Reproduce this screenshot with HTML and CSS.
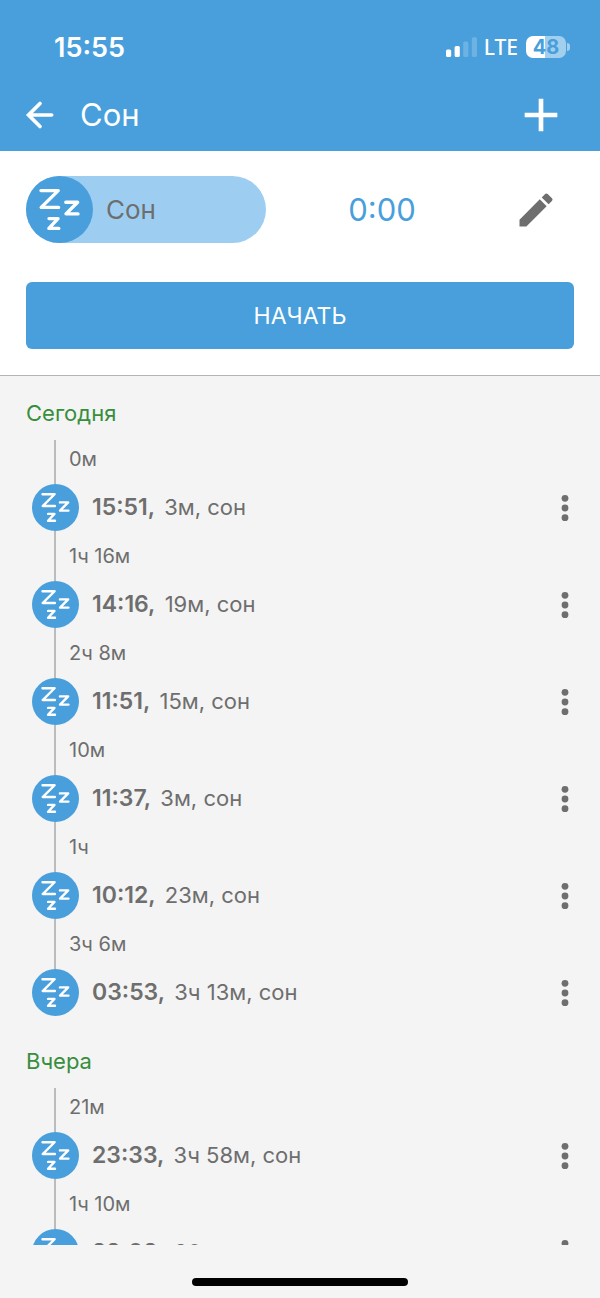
FILE: index.html
```html
<!DOCTYPE html>
<html lang="ru">
<head>
<meta charset="utf-8">
<meta name="viewport" content="width=device-width, initial-scale=1">
<title>Сон</title>
<link rel="stylesheet" href="styles.css">
</head>
<body>
<svg class="defs" aria-hidden="true">
  <symbol id="zzz" viewBox="0 0 67 67">
    <g fill="none" stroke="#fff" stroke-width="3.4" stroke-linecap="round" stroke-linejoin="round">
      <path d="M15 14.6H32.2L15.2 31.4H32.6"/>
      <path d="M39.8 26.2H51.6L40 37.9H52"/>
      <path d="M23 42.6H32L22.9 52.4H32.8"/>
    </g>
  </symbol>
  <symbol id="dots" viewBox="0 0 8 28">
    <g fill="#6e6e6e"><circle cx="4" cy="4.3" r="3.4"/><circle cx="4" cy="14" r="3.4"/><circle cx="4" cy="23.7" r="3.4"/></g>
  </symbol>
</svg>
<header class="header">
  <div class="status">
    <span class="clock">15:55</span>
    <div class="indicators">
      <svg class="signal" viewBox="0 0 32 22" fill="#fff" aria-hidden="true">
        <rect x="0" y="13.5" width="5.2" height="7.5" rx="1.5"/>
        <rect x="8.6" y="10" width="5.2" height="11" rx="1.5"/>
        <rect x="17.2" y="5.5" width="5.2" height="15.5" rx="1.5" opacity=".2"/>
        <rect x="25.8" y="1.3" width="5.2" height="19.7" rx="1.5" opacity=".2"/>
      </svg>
      <span class="network">LTE</span>
      <div class="battery">48</div>
      <span class="nub"></span>
    </div>
  </div>
  <nav class="nav">
    <button class="icon-button" aria-label="Назад">
      <svg width="40" height="40" viewBox="0 0 24 24" fill="none" stroke="#fff" stroke-width="2.2" stroke-linecap="round"><path d="M19 12H5.2M12 5.1L5.1 12l6.9 6.9"/></svg>
    </button>
    <h1 class="title">Сон</h1>
    <button class="icon-button" aria-label="Добавить">
      <svg width="56" height="56" viewBox="0 0 24 24" fill="#fff"><path d="M19 13h-6v6h-2v-6H5v-2h6V5h2v6h6z"/></svg>
    </button>
  </nav>
</header>
<section class="timer">
  <div class="timer-row">
    <button class="pill"><svg class="pill-icon" aria-hidden="true"><use href="#zzz"/></svg><span>Сон</span></button>
    <span class="elapsed">0:00</span>
    <button class="icon-button edit" aria-label="Изменить">
      <svg width="44" height="44" viewBox="0 0 24 24" fill="#6e6e6e"><path d="M3 17.25V21h3.75L17.81 9.94l-3.75-3.75L3 17.25zM20.71 7.04a1 1 0 0 0 0-1.41l-2.34-2.34a1 1 0 0 0-1.41 0l-1.83 1.83 3.75 3.75 1.83-1.83z"/></svg>
    </button>
  </div>
  <button class="start">НАЧАТЬ</button>
</section>
<main class="log">
  <section class="day">
    <h2 class="day-title">Сегодня</h2>
    <div class="gap">0м</div>
    <div class="entry"><svg class="entry-icon" aria-hidden="true"><use href="#zzz"/></svg><p class="entry-text"><b>15:51,</b> 3м, сон</p><button class="more" aria-label="Меню"><svg width="8" height="28"><use href="#dots"/></svg></button></div>
    <div class="gap">1ч 16м</div>
    <div class="entry"><svg class="entry-icon" aria-hidden="true"><use href="#zzz"/></svg><p class="entry-text"><b>14:16,</b> 19м, сон</p><button class="more" aria-label="Меню"><svg width="8" height="28"><use href="#dots"/></svg></button></div>
    <div class="gap">2ч 8м</div>
    <div class="entry"><svg class="entry-icon" aria-hidden="true"><use href="#zzz"/></svg><p class="entry-text"><b>11:51,</b> 15м, сон</p><button class="more" aria-label="Меню"><svg width="8" height="28"><use href="#dots"/></svg></button></div>
    <div class="gap">10м</div>
    <div class="entry"><svg class="entry-icon" aria-hidden="true"><use href="#zzz"/></svg><p class="entry-text"><b>11:37,</b> 3м, сон</p><button class="more" aria-label="Меню"><svg width="8" height="28"><use href="#dots"/></svg></button></div>
    <div class="gap">1ч</div>
    <div class="entry"><svg class="entry-icon" aria-hidden="true"><use href="#zzz"/></svg><p class="entry-text"><b>10:12,</b> 23м, сон</p><button class="more" aria-label="Меню"><svg width="8" height="28"><use href="#dots"/></svg></button></div>
    <div class="gap">3ч 6м</div>
    <div class="entry"><svg class="entry-icon" aria-hidden="true"><use href="#zzz"/></svg><p class="entry-text"><b>03:53,</b> 3ч 13м, сон</p><button class="more" aria-label="Меню"><svg width="8" height="28"><use href="#dots"/></svg></button></div>
  </section>
  <section class="day">
    <h2 class="day-title">Вчера</h2>
    <div class="gap">21м</div>
    <div class="entry"><svg class="entry-icon" aria-hidden="true"><use href="#zzz"/></svg><p class="entry-text"><b>23:33,</b> 3ч 58м, сон</p><button class="more" aria-label="Меню"><svg width="8" height="28"><use href="#dots"/></svg></button></div>
    <div class="gap">1ч 10м</div>
    <div class="entry"><svg class="entry-icon" aria-hidden="true"><use href="#zzz"/></svg><p class="entry-text"><b>22:02,</b> 20м, сон</p><button class="more" aria-label="Меню"><svg width="8" height="28"><use href="#dots"/></svg></button></div>
  </section>
</main>
<footer class="home"><span class="home-bar"></span></footer>
</body>
</html>
```
FILE: styles.css
```css
:root {
  --blue: #489fdc;
  --blue-light: #9dcef2;
  --ink: #6e6e6e;
  --surface: #f4f4f4;
}

* { box-sizing: border-box; }

body {
  margin: 0;
  height: 100vh;
  display: flex;
  flex-direction: column;
  background: var(--surface);
  color: var(--ink);
  font-family: Inter, "Liberation Sans", sans-serif;
  font-size: 22px;
}

button {
  border: 0;
  padding: 0;
  background: none;
  color: inherit;
  font: inherit;
}

svg { display: block; }
h1, h2, p { margin: 0; font-weight: 400; }
.defs { display: none; }

.header { flex: none; background: var(--blue); color: #fff; }

.status {
  display: flex;
  align-items: center;
  justify-content: space-between;
  height: 78px;
  padding: 16px 30px 0 54px;
}
.clock { font-size: 27px; font-weight: 600; }
.indicators { display: flex; align-items: center; }
.signal { width: 32px; height: 22px; }
.network { margin: 0 8px 0 6px; font-family: "Noto Sans", sans-serif; font-size: 21px; font-weight: 500; line-height: 24px; }
.battery {
  width: 40px;
  height: 22px;
  border-radius: 7px;
  background: linear-gradient(90deg, #fff 48%, #a3cfee 48%);
  color: var(--blue);
  font-size: 20px;
  font-weight: 700;
  line-height: 22px;
  text-align: center;
}
.nub { width: 3px; height: 8px; margin-left: 1px; border-radius: 0 4px 4px 0; background: #a3cfee; }

.nav { display: flex; align-items: center; height: 73px; padding: 0 31px 0 20px; }
.title { flex: 1; margin-left: 20px; font-size: 31px; }

.timer {
  flex: none;
  display: flex;
  flex-direction: column;
  gap: 39px;
  padding: 25px 26px 26px;
  border-bottom: 1px solid #b4b4b4;
  background: #fff;
}
.timer-row { display: flex; align-items: center; }
.pill {
  display: flex;
  align-items: center;
  gap: 13px;
  width: 240px;
  height: 67px;
  border-radius: 34px;
  background: var(--blue-light);
  font-size: 26px;
}
.pill-icon { width: 67px; height: 67px; border-radius: 50%; background: var(--blue); }
.elapsed { flex: 1; padding-right: 16px; color: var(--blue); font-size: 31px; text-align: center; }
.edit { margin-right: 16px; }
.start {
  height: 67px;
  border-radius: 6px;
  background: var(--blue);
  color: #fff;
  font-size: 23px;
}

.log { flex: 1; min-height: 0; overflow: hidden; padding-top: 10px; }
.day { margin-bottom: 18px; }
.day-title { padding-left: 26px; color: #388e3c; font-size: 22px; line-height: 54px; }
.gap {
  margin-left: 54px;
  padding: 13px 0 13px 13px;
  border-left: 2px solid #bcbcbc;
  font-size: 20px;
  line-height: 24px;
}
.day-title + .gap { padding-top: 7px; }
.entry { display: flex; align-items: center; padding: 0 31px 0 32px; }
.entry-icon { width: 47px; height: 47px; border-radius: 50%; background: var(--blue); }
.entry-text { flex: 1; padding-bottom: 2px; margin-left: 13px; font-size: 22px; }
.entry-text b { margin-right: 3px; font-size: 23px; font-weight: 600; }

.home { flex: none; display: flex; justify-content: center; height: 53px; padding-top: 33px; }
.home-bar { width: 36%; height: 8px; border-radius: 4px; background: #000; }
```
